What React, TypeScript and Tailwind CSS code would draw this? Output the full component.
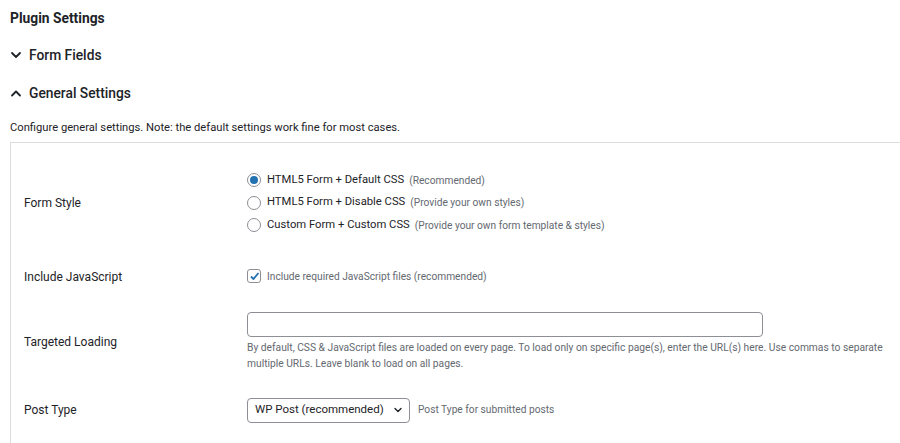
import React from 'react';

const font = { fontFamily: 'Roboto, "Noto Sans", sans-serif' };

const Chevron = ({ up = false }: { up?: boolean }) => (
  <svg width="12" height="12" viewBox="0 0 12 12" className="shrink-0">
    <path
      d={up ? 'M2 8.5 L6 4.5 L10 8.5' : 'M2 4 L6 8 L10 4'}
      fill="none"
      stroke="#1d2327"
      strokeWidth="1.8"
      strokeLinecap="round"
      strokeLinejoin="round"
    />
  </svg>
);

const Radio = ({ checked, label, hint }: { checked?: boolean; label: string; hint: string }) => (
  <label className="flex items-center h-[22.5px] whitespace-nowrap">
    <span className="w-[14px] h-[14px] rounded-full border border-[#8c8f94] flex items-center justify-center shrink-0">
      {checked && <span className="w-[8px] h-[8px] rounded-full bg-[#2271b1]" />}
    </span>
    <span className="ml-[6px] text-[11.25px] text-[#1d2327]">{label}</span>
    <span className="ml-[5px] text-[10.2px] text-[#646970]">{hint}</span>
  </label>
);

const Row = ({ label, children, className = '' }: { label: string; children: React.ReactNode; className?: string }) => (
  <div className={`flex items-center ${className}`}>
    <div className="w-[236px] shrink-0 pl-[13px] text-[12px] text-[#1d2327]">{label}</div>
    <div className="flex-1">{children}</div>
  </div>
);

export default function App() {
  return (
    <div className="w-[900px] h-[443px] overflow-hidden bg-white pl-[10px]" style={font}>
      <h1 className="pt-[8px] text-[13.8px] font-bold text-[#1d2327] leading-[20px]">Plugin Settings</h1>

      <div className="mt-[17px] flex items-center gap-[7px] h-[20px]">
        <Chevron />
        <span className="text-[13.8px] font-medium text-[#1d2327]">Form Fields</span>
      </div>
      <div className="mt-[18px] flex items-center gap-[7px] h-[20px]">
        <Chevron up />
        <span className="text-[13.8px] font-medium text-[#1d2327]">General Settings</span>
      </div>

      <p className="mt-[17px] text-[11.2px] text-[#1d2327] leading-[16px]">
        Configure general settings. Note: the default settings work fine for most cases.
      </p>

      <div className="mt-[6px] border-l border-t border-[#dcdcde] pt-[26px] h-[320px]">
        <Row label="Form Style">
          <Radio checked label="HTML5 Form + Default CSS" hint="(Recommended)" />
          <Radio label="HTML5 Form + Disable CSS" hint="(Provide your own styles)" />
          <Radio label="Custom Form + Custom CSS" hint="(Provide your own form template & styles)" />
        </Row>

        <Row label="Include JavaScript" className="mt-[30px] h-[20px]">
          <label className="flex items-center whitespace-nowrap">
            <span className="w-[14px] h-[14px] rounded-[3px] border border-[#8c8f94] flex items-center justify-center">
              <svg width="11" height="11" viewBox="0 0 11 11">
                <path d="M2 5.5 L4.5 8 L9.5 2" fill="none" stroke="#2271b1" strokeWidth="1.8" strokeLinejoin="round" />
              </svg>
            </span>
            <span className="ml-[6px] text-[10.2px] text-[#646970]">Include required JavaScript files (recommended)</span>
          </label>
        </Row>

        <Row label="Targeted Loading" className="mt-[25px]">
          <input
            type="text"
            className="block w-[516px] h-[25px] border border-[#8c8f94] rounded-[4px] outline-none px-2 text-[12px]"
          />
          <p className="mt-[3px] text-[10.25px] leading-[16px] text-[#646970] max-w-[645px]">
            By default, CSS &amp; JavaScript files are loaded on every page. To load only on specific page(s), enter the URL(s) here. Use commas to separate multiple URLs. Leave blank to load on all pages.
          </p>
        </Row>

        <Row label="Post Type" className="mt-[26px]">
          <div className="flex items-center whitespace-nowrap">
            <div className="w-[163px] h-[25px] border border-[#8c8f94] rounded-[4px] flex items-center justify-between pl-[7px] pr-[6px]">
              <span className="text-[11.5px] text-[#1d2327]">WP Post (recommended)</span>
              <svg width="10" height="10" viewBox="0 0 10 10">
                <path d="M2 3.5 L5 6.5 L8 3.5" fill="none" stroke="#1d2327" strokeWidth="1.4" strokeLinecap="round" strokeLinejoin="round" />
              </svg>
            </div>
            <span className="ml-[8px] text-[10.2px] text-[#646970]">Post Type for submitted posts</span>
          </div>
        </Row>
      </div>
    </div>
  );
}
